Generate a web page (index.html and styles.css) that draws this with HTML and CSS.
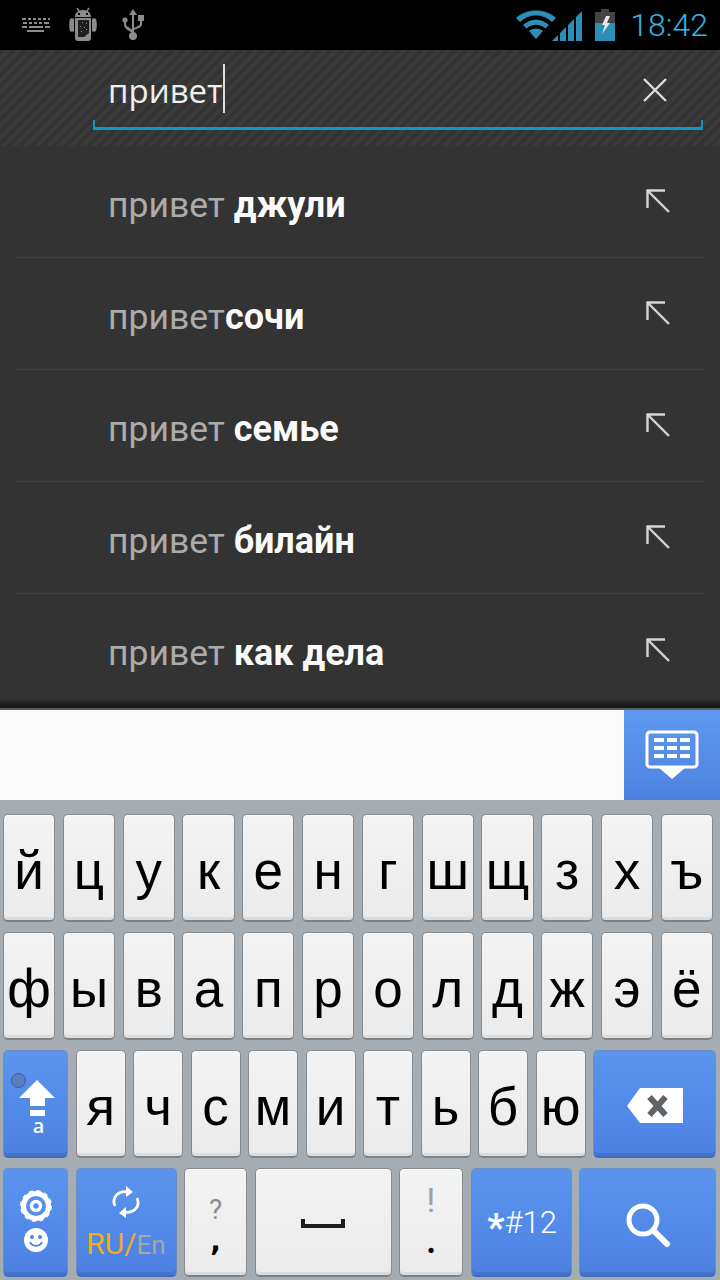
FILE: index.html
```html
<!DOCTYPE html>
<html lang="ru">
<head>
    <meta charset="UTF-8">
    <meta name="viewport" content="width=device-width, initial-scale=1.0">
    <title>Поиск</title>
    <link rel="stylesheet" href="styles.css">
</head>
<body>
    <div class="status-bar">
        <div class="status-left">
            <svg class="ic-keyboard" width="30" height="16" viewBox="0 0 30 16" fill="#8c8c8c">
                <path d="M1 1h4v2H1zM7 1h3v2H7zM12 1h3v2h-3zM17 1h3v2h-3zM22 1h3v2h-3zM27 1h2v2h-2zM2 5h4v2H2zM8 5h3v2H8zM13 5h3v2h-3zM18 5h3v2h-3zM23 5h5v2h-5zM1 9h5v2H1zM8 9h14v2H8zM24 9h5v2h-5zM6 13h17v2H6z"/>
            </svg>
            <svg class="ic-android" width="30" height="36" viewBox="0 0 30 36">
                <path fill="#8c8c8c" d="M7 10c0-4 3-7 8-7s8 3 8 7zM2 12c1-1 3-1 4 0v12c-1 1-3 1-4 0-1-3-1-9 0-12zM24 12c1-1 3-1 4 0 1 3 1 9 0 12-1 1-3 1-4 0zM7 11h16v20c0 2-1 3-3 3h-10c-2 0-3-1-3-3z"/>
                <path stroke="#8c8c8c" stroke-width="1.5" d="M9 1l2 3M21 1l-2 3"/>
                <rect x="10" y="13" width="11" height="17" fill="#1e1e1e"/>
                <path fill="#8c8c8c" d="M14 15h1v1h-1zM18 16h1v1h-1zM12 19h1v1h-1zM16 20h1v1h-1zM13 24h1v1h-1zM18 22h1v1h-1zM15 31l7-6v4l-3 4h-4z"/>
                <rect x="10" y="6" width="2" height="2" fill="#000"/>
                <rect x="18" y="6" width="2" height="2" fill="#000"/>
            </svg>
            <svg class="ic-usb" width="24" height="33" viewBox="0 0 24 33" fill="#8c8c8c">
                <path d="M11 0l4 6h-3v18h-2V6H7z"/>
                <circle cx="11" cy="27" r="4"/>
                <circle cx="3" cy="11" r="2.6"/>
                <rect x="16" y="6" width="6" height="6"/>
                <path d="M2 13h2v2c0 2 2 3 7 6v3c-6-3-9-5-9-9zM18 12h2v3c0 3-3 4-8 6v-2c4-2 6-3 6-4z"/>
            </svg>
        </div>
        <div class="status-right">
            <svg class="ic-wifi" width="40" height="32" viewBox="0 0 40 32" fill="#2d8fb8">
                <path d="M0 9C10-1 30-1 40 9l-4 4C26 4 14 4 4 13z"/>
                <path d="M7 16c8-7 18-7 26 0l-3.500 3.500c-6-5-13-5-19 0z"/>
                <path d="M13 22c4-3.500 10-3.500 14 0l-7 8z"/>
            </svg>
            <svg class="ic-signal" width="31" height="31" viewBox="0 0 31 31" fill="#2d8fb8">
                <path d="M0 31l6-6v6zM8 31v-8l6-6v14zM16 31V15l6-6v22zM24 31V7l6-6v30z"/>
            </svg>
            <svg class="ic-battery" width="20" height="32" viewBox="0 0 20 32">
                <path fill="#444" d="M6 0h8v3h6v13H0V3h6z"/>
                <rect y="14" width="20" height="18" fill="#2d8fb8"/>
                <path fill="#e8e8e8" d="M11 7h4l-3 7h3l-8 11 3-9H7z"/>
            </svg>
            <span class="clock">18:42</span>
        </div>
    </div>

    <div class="search-bar">
        <div class="search-field">
            <span class="search-text">привет</span><span class="cursor"></span>
            <svg class="ic-clear" width="26" height="26" viewBox="0 0 26 26" stroke="#dcdcdc" stroke-width="2.4" fill="none">
                <path d="M2 2l22 22M24 2L2 24"/>
            </svg>
        </div>
    </div>

    <div class="suggestions">
        <div class="row">
            <span class="typed">привет </span><b>джули</b>
            <svg class="ic-arrow" width="24" height="24" viewBox="0 0 24 24" stroke="#d4d4d4" stroke-width="2.400" fill="none"><path d="M1.500 19V1.500H19M2 2l21 21"/></svg>
        </div>
        <div class="row">
            <span class="typed">привет</span><b>сочи</b>
            <svg class="ic-arrow" width="24" height="24" viewBox="0 0 24 24" stroke="#d4d4d4" stroke-width="2.400" fill="none"><path d="M1.500 19V1.500H19M2 2l21 21"/></svg>
        </div>
        <div class="row">
            <span class="typed">привет </span><b>семье</b>
            <svg class="ic-arrow" width="24" height="24" viewBox="0 0 24 24" stroke="#d4d4d4" stroke-width="2.400" fill="none"><path d="M1.500 19V1.500H19M2 2l21 21"/></svg>
        </div>
        <div class="row">
            <span class="typed">привет </span><b>билайн</b>
            <svg class="ic-arrow" width="24" height="24" viewBox="0 0 24 24" stroke="#d4d4d4" stroke-width="2.400" fill="none"><path d="M1.500 19V1.500H19M2 2l21 21"/></svg>
        </div>
        <div class="row">
            <span class="typed">привет </span><b>как дела</b>
            <svg class="ic-arrow" width="24" height="24" viewBox="0 0 24 24" stroke="#d4d4d4" stroke-width="2.400" fill="none"><path d="M1.500 19V1.500H19M2 2l21 21"/></svg>
        </div>
    </div>
    <div class="panel-edge"></div>

    <div class="candidates">
        <div class="hide-button">
            <svg width="54" height="50" viewBox="0 0 54 50">
                <rect x="2" y="2" width="50" height="35" rx="3" fill="none" stroke="#fff" stroke-width="3"/>
                <path fill="#fff" d="M9 8h10v4H9zM22 8h10v4H22zM35 8h10v4H35zM9 16h10v4H9zM22 16h10v4H22zM35 16h10v4H35zM9 24h10v4H9zM22 24h10v4H22zM35 24h10v4H35zM14 38h26L27 49z"/>
            </svg>
        </div>
    </div>

    <div class="keyboard">
        <div class="key-row row-letters">
            <div class="key">й</div><div class="key">ц</div><div class="key">у</div><div class="key">к</div><div class="key">е</div><div class="key">н</div><div class="key">г</div><div class="key">ш</div><div class="key">щ</div><div class="key">з</div><div class="key">х</div><div class="key">ъ</div>
        </div>
        <div class="key-row row-letters">
            <div class="key">ф</div><div class="key">ы</div><div class="key">в</div><div class="key">а</div><div class="key">п</div><div class="key">р</div><div class="key">о</div><div class="key">л</div><div class="key">д</div><div class="key">ж</div><div class="key">э</div><div class="key">ё</div>
        </div>
        <div class="key-row row-shift">
            <div class="key blue shift">
                <span class="shift-dot"></span>
                <svg width="38" height="38" viewBox="0 0 38 38" fill="#fff">
                    <path d="M19 0l18 18H27v8H12v-8H1zM12 30h15v6H12z"/>
                </svg>
                <span class="shift-label">a</span>
            </div>
            <div class="key">я</div><div class="key">ч</div><div class="key">с</div><div class="key">м</div><div class="key">и</div><div class="key">т</div><div class="key">ь</div><div class="key">б</div><div class="key">ю</div>
            <div class="key blue backspace">
                <svg width="56" height="36" viewBox="0 0 56 36">
                    <path fill="#fff" d="M13 0h43v35H13L0 18z"/>
                    <path stroke="#5f6468" stroke-width="6" d="M22.500 9l16 18M38.500 9L22.500 27"/>
                </svg>
            </div>
        </div>
        <div class="key-row row-bottom">
            <div class="key blue settings">
                <svg width="32" height="32" viewBox="0 0 32 32" fill="none" stroke="#fff">
                    <circle cx="16" cy="16" r="12.500" stroke-width="5"/>
                    <circle cx="16" cy="16" r="14.500" stroke-width="3" stroke-dasharray="4 3.600"/>
                    <circle cx="16" cy="16" r="4.500" stroke-width="3.500"/>
                </svg>
                <svg width="24" height="24" viewBox="0 0 24 24">
                    <circle cx="12" cy="12" r="12" fill="#fff"/>
                    <circle cx="8" cy="9" r="2" fill="#4f86e4"/>
                    <circle cx="16" cy="9" r="2" fill="#4f86e4"/>
                    <path d="M6 14c2 5 10 5 12 0" fill="none" stroke="#4f86e4" stroke-width="2"/>
                </svg>
            </div>
            <div class="key blue lang">
                <svg width="30" height="34" viewBox="0 0 30 34" fill="none" stroke="#fff" stroke-width="2.800">
                    <path d="M4 21C0 12 8 5 17 7"/>
                    <path d="M26 13c4 9-4 16-13 14"/>
                    <path fill="#fff" stroke="none" d="M15 1l7 6-7 5zM15 22v11l-7-5z"/>
                </svg>
                <span class="lang-label"><span class="lang-ru">RU/</span><span class="lang-en">En</span></span>
            </div>
            <div class="key double question">
                <span class="hint">?</span>
                <span class="main">,</span>
            </div>
            <div class="key space">
                <svg width="44" height="10" viewBox="0 0 44 10" fill="#1c1c1c"><path d="M0 0h4v5h36V0h4v9H0z"/></svg>
            </div>
            <div class="key double">
                <span class="hint bang">!</span>
                <span class="main period">.</span>
            </div>
            <div class="key blue symbols"><span class="star">*</span>#12</div>
            <div class="key blue search-key">
                <svg width="48" height="48" viewBox="0 0 48 48" fill="none" stroke="#fff">
                    <circle cx="19" cy="19" r="14" stroke-width="5"/>
                    <path d="M30 30l13 13" stroke-width="6" stroke-linecap="round"/>
                </svg>
            </div>
        </div>
    </div>
</body>
</html>
```

FILE: styles.css
```css
* {
    margin: 0;
    padding: 0;
    box-sizing: border-box;
}

body {
    width: 720px;
    height: 1280px;
    overflow: hidden;
    background: #333;
    font-family: Roboto, sans-serif;
    color: white;
}

svg {
    display: block;
}

.status-bar {
    height: 50px;
    background: #000;
    display: flex;
    align-items: center;
    justify-content: space-between;
    padding: 0 12px 0 21px;
}

.status-left {
    display: flex;
    align-items: center;
}

.ic-keyboard {
    margin-right: 17px;
}

.ic-android {
    margin-right: 24px;
}

.status-right {
    display: flex;
    align-items: center;
}

.ic-wifi {
    margin-right: -4px;
}

.ic-signal {
    margin-right: 12px;
}

.ic-battery {
    margin-right: 15px;
}

.clock {
    font-size: 32px;
    font-weight: 300;
    color: #33b5e5;
}

.search-bar {
    height: 96px;
    padding: 0 17px 16px 93px;
    display: flex;
    align-items: flex-end;
    background: repeating-linear-gradient(135deg, #333 0, #333 4px, #3a3a3a 4px, #3a3a3a 8px);
}

.search-field {
    position: relative;
    flex: 1;
    height: 72px;
    padding: 0 0 5px 15px;
    display: flex;
    align-items: center;
    border-bottom: 3px solid #0e97c8;
}

.search-field::before,
.search-field::after {
    content: "";
    position: absolute;
    bottom: 0;
    width: 2px;
    height: 7px;
    background: #0e97c8;
}

.search-field::before {
    left: 0;
}

.search-field::after {
    right: 0;
}

.search-text {
    font-family: "Open Sans", sans-serif;
    font-size: 33px;
    color: #eee;
    margin-top: 1px;
}

.cursor {
    width: 2px;
    height: 49px;
    background: #ddd;
    margin-top: -4px;
}

.ic-clear {
    margin-left: auto;
    margin-right: 35px;
}

.suggestions {
    height: 554px;
    background: #333;
}

.row {
    position: relative;
    height: 112px;
    margin: 0 16px;
    padding: 6px 34px 0 92px;
    display: flex;
    align-items: center;
    white-space: pre;
    font-size: 35.500px;
    border-bottom: 1px solid #414141;
}

.row:last-child {
    border-bottom: none;
}

.row b {
    font-weight: 700;
    font-size: 36px;
    color: #fafafa;
}

.typed {
    color: #ababab;
}

.ic-arrow {
    margin-left: auto;
    margin-top: -7px;
}

.panel-edge {
    height: 10px;
    background: linear-gradient(#2d2d2d, #141414 80%, #5c5c5c 80%);
}

.candidates {
    height: 90px;
    background: #fafafa;
    display: flex;
    justify-content: flex-end;
}

.hide-button {
    width: 96px;
    background: linear-gradient(#5e99f0, #4e81df);
    display: flex;
    align-items: center;
    justify-content: center;
}

.keyboard {
    height: 480px;
    padding: 14px 4px 0 3px;
    background: #a5acb2;
    display: flex;
    flex-direction: column;
    gap: 10.500px;
}

.key-row {
    display: grid;
    height: 107.500px;
    gap: 7.500px;
}

.row-letters {
    grid-template-columns: repeat(12, 1fr);
    margin-right: 3px;
}

.row-shift {
    grid-template-columns: 65px repeat(9, 1fr) 123px;
}

.row-bottom {
    height: 109px;
    grid-template-columns: 65px 101px 63px 137px 64px 101px 137px;
}

.key {
    position: relative;
    display: flex;
    align-items: center;
    justify-content: center;
    padding-top: 6px;
    border-radius: 5px;
    background: linear-gradient(#f3f3f3, #ebebeb);
    border: 1px solid #868d92;
    border-bottom: 2px solid #7b8287;
    box-shadow: inset 0 1px 0 #fff, inset 0 -3px 0 #dcdcdc;
    color: #000;
    font-family: "Liberation Sans", sans-serif;
    font-size: 53px;
    line-height: 1;
}

.blue {
    background: linear-gradient(#5b95ee, #4c80e2);
    border: 1px solid #6f8fc4;
    border-bottom: 2px solid #3e6cc2;
    box-shadow: inset 0 -3px 0 #4572cc;
    color: #fff;
}

.shift {
    flex-direction: column;
    gap: 2px;
    padding: 10px 0 0 2px;
}

.shift-dot {
    position: absolute;
    top: 22px;
    left: 7px;
    width: 15px;
    height: 15px;
    border-radius: 50%;
    background: #5a7ec0;
    border: 1px solid #3f5e9c;
}

.shift-label {
    font-family: "Open Sans", sans-serif;
    font-size: 20px;
    font-weight: 600;
    margin: -4px 0 0 4px;
}

.backspace {
    padding-top: 5px;
}

.settings {
    flex-direction: column;
    gap: 6px;
    padding: 0 0 2px 1px;
}

.lang {
    flex-direction: column;
    gap: 10px;
    padding-top: 0;
}

.lang-label {
    font-family: Roboto, sans-serif;
    font-size: 30px;
    display: flex;
    align-items: baseline;
}

.lang-ru {
    color: #f4ad17;
}

.lang-en {
    font-size: 26px;
    color: #a6a6a6;
}

.double {
    flex-direction: column;
    gap: 8px;
    padding-top: 0;
}

.question {
    gap: 4px;
    padding-top: 8px;
}

.hint {
    font-family: Roboto, sans-serif;
    font-size: 28px;
    color: #8c8c8c;
}

.bang {
    font-size: 34px;
    color: #a0a0a0;
}

.main {
    font-family: "DejaVu Sans", sans-serif;
    font-size: 28px;
    font-weight: 700;
}

.period {
    font-family: Lato, sans-serif;
    font-size: 32px;
    font-weight: 900;
    margin-bottom: 4px;
}

.space {
    padding-top: 4px;
}

.symbols {
    font-family: Roboto, sans-serif;
    font-size: 31px;
    font-weight: 300;
    padding: 0 0 0 2px;
}

.star {
    font-weight: 700;
    font-size: 38px;
    padding-top: 12px;
}

.search-key {
    padding-top: 6px;
}
```
